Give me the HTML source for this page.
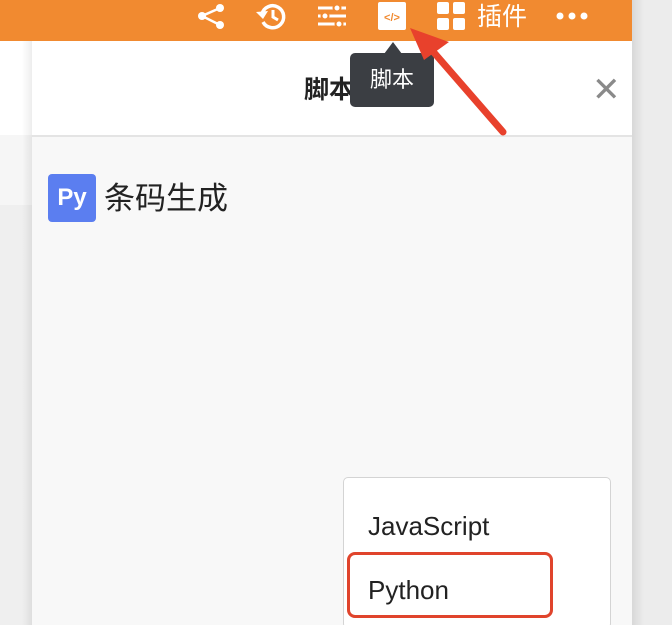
<!DOCTYPE html>
<html style="overflow:hidden"><head><meta charset="utf-8"><style>
html,body{margin:0;width:672px;height:625px;overflow:hidden}
body{position:relative;background:#f3f3f3;font-family:"Liberation Sans","Noto Sans CJK SC",sans-serif}
.abs{position:absolute}
</style></head><body>
<div class="abs" style="left:0;top:41px;width:32px;height:94px;background:#fff"></div>
<div class="abs" style="left:0;top:135px;width:32px;height:70px;background:#f6f6f6"></div>
<div class="abs" style="left:0;top:205px;width:32px;height:420px;background:#efefef"></div>
<div class="abs" style="left:22px;top:41px;width:10px;height:584px;background:linear-gradient(90deg,rgba(0,0,0,0),rgba(0,0,0,.07))"></div>
<div class="abs" style="left:632px;top:0;width:40px;height:625px;background:linear-gradient(90deg,#d8d8d8,#ececec 30%,#ececec)"></div>
<div class="abs" style="left:0;top:0;width:632px;height:41px;background:#f18a30"></div>
<div class="abs" style="left:32px;top:41px;width:600px;height:94px;background:#fff;border-bottom:2px solid #e4e4e4"></div>
<div class="abs" style="left:32px;top:137px;width:600px;height:488px;background:#f8f8f8"></div>
<div class="abs" style="left:304px;top:74px;font-size:25px;font-weight:bold;color:#222;line-height:32px">脚本</div>
<div class="abs" style="left:592px;top:70px;font-size:34px;color:#8a8a8a;line-height:40px">✕</div>
<svg class="abs" style="left:0;top:0" width="632" height="41">
<g fill="#fff" stroke="#fff">
<circle cx="220" cy="8" r="4" stroke="none"/><circle cx="202" cy="16" r="4" stroke="none"/><circle cx="220" cy="25" r="4" stroke="none"/>
<path d="M220 8L202 16L220 25" stroke-width="2.5" fill="none"/>
<path d="M262 14A11 11 0 1 1 263 22" stroke-width="3.5" fill="none"/><path d="M256 12l7 7 5-8z" stroke="none"/><path d="M273 10v7l5 3" stroke-width="3" fill="none"/>
<path d="M318 8h28M318 16h28M318 24h28" stroke-width="3"/>
<circle cx="337" cy="8" r="3.5" stroke="#f18a30" stroke-width="2"/><circle cx="325" cy="16" r="3.5" stroke="#f18a30" stroke-width="2"/><circle cx="339" cy="24" r="3.5" stroke="#f18a30" stroke-width="2"/>
<rect x="378" y="2" width="28" height="28" rx="2" stroke="none"/>
<rect x="437" y="2" width="12" height="12" rx="2" stroke="none"/><rect x="453" y="2" width="12" height="12" rx="2" stroke="none"/><rect x="437" y="18" width="12" height="12" rx="2" stroke="none"/><rect x="453" y="18" width="12" height="12" rx="2" stroke="none"/>
<circle cx="560" cy="16" r="3.5" stroke="none"/><circle cx="572" cy="16" r="3.5" stroke="none"/><circle cx="584" cy="16" r="3.5" stroke="none"/>
</g>
<text x="392" y="21" font-size="11" font-weight="bold" fill="#f18a30" text-anchor="middle" font-family="Liberation Sans">&lt;/&gt;</text>
<text x="477" y="25" font-size="25" fill="#fff" font-family="Liberation Sans,Noto Sans CJK SC,sans-serif">插件</text>
</svg>
<div class="abs" style="left:384px;top:42px;width:0;height:0;border-left:9px solid transparent;border-right:9px solid transparent;border-bottom:12px solid #3b3e43"></div>
<div class="abs" style="left:350px;top:53px;width:84px;height:54px;background:#3b3e43;border-radius:5px;color:#fff;font-size:22px;line-height:54px;text-align:center">脚本</div>
<svg class="abs" style="left:0;top:0" width="672" height="625">
<path d="M503 132L430 48" stroke="#e8412c" stroke-width="7" stroke-linecap="round"/>
<path d="M410 28L449 42L424 60z" fill="#e8412c"/>
</svg>
<div class="abs" style="left:48px;top:174px;width:48px;height:48px;background:#5b7ef0;border-radius:4px;color:#fff;font-size:24px;font-weight:bold;line-height:48px;text-align:center">Py</div>
<div class="abs" style="left:104px;top:180px;font-size:31px;color:#222;line-height:38px">条码生成</div>
<div class="abs" style="left:343px;top:477px;width:266px;height:150px;background:#fff;border:1px solid #d4d4d4;border-radius:5px"></div>
<div class="abs" style="left:368px;top:509px;font-size:26px;color:#222;line-height:34px">JavaScript</div>
<div class="abs" style="left:368px;top:573px;font-size:26px;color:#222;line-height:34px">Python</div>
<div class="abs" style="left:347px;top:552px;width:200px;height:60px;border:3px solid #e0442c;border-radius:8px"></div>
</body></html>
